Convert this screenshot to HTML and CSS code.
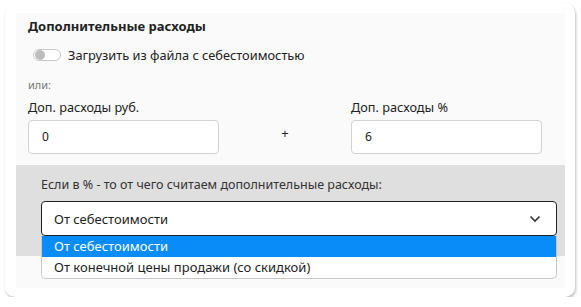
FILE: index.html
```html
<!DOCTYPE html>
<html lang="ru">
<head>
    <meta charset="UTF-8">
    <title>Дополнительные расходы</title>
    <link rel="stylesheet" href="styles.css">
</head>
<body>
<div class="card">
    <div class="panel">
        <div class="title">Дополнительные расходы</div>
        <label class="switch-row">
            <span class="switch"><span class="knob"></span></span>
            <span>Загрузить из файла с себестоимостью</span>
        </label>
        <div class="or">или:</div>
        <div class="fields">
            <div class="field">
                <div class="label">Доп. расходы руб.</div>
                <div class="input">0</div>
            </div>
            <div class="plus">+</div>
            <div class="field">
                <div class="label">Доп. расходы %</div>
                <div class="input">6</div>
            </div>
        </div>
        <div class="base">
            <div class="base-label">Если в % - то от чего считаем дополнительные расходы:</div>
            <div class="select-wrap">
                <div class="select">
                    <span>От себестоимости</span>
                    <svg width="12" height="8" viewBox="0 0 12 8"><path d="M1.5 1.5 L6 6 L10.5 1.5" fill="none" stroke="#333" stroke-width="1.6"/></svg>
                </div>
                <ul class="options">
                    <li class="active">От себестоимости</li>
                    <li>От конечной цены продажи (со скидкой)</li>
                </ul>
            </div>
        </div>
    </div>
</div>
</body>
</html>
```

FILE: styles.css
```css
body {
    margin: 0;
    background: #fff;
    font-family: "Noto Sans", "Open Sans", sans-serif;
    color: #222;
}
.card {
    margin: 3px 0 0 5px;
    width: 570px;
    height: 294px;
    box-sizing: border-box;
    padding: 10px 10px 9px 11px;
    background: #fff;
    border-radius: 10px;
    box-shadow: 1px 2px 3px rgba(0, 0, 0, 0.25);
}
.panel {
    height: 100%;
    background: #fafafa;
    padding-top: 4px;
    box-sizing: border-box;
}
.title {
    padding-left: 12px;
    font-size: 13px;
    font-weight: bold;
    line-height: 18px;
}
.switch-row {
    display: flex;
    align-items: center;
    gap: 7px;
    margin: 11px 0 0 17px;
    font-size: 12.8px;
    line-height: 18px;
}
.switch {
    width: 26px;
    height: 10px;
    border: 1px solid #c8c8c8;
    border-radius: 6px;
    background: #fff;
    position: relative;
}
.knob {
    position: absolute;
    left: 1px;
    top: 0;
    width: 10px;
    height: 10px;
    border-radius: 50%;
    background: #bdbdbd;
}
.or {
    margin: 13px 0 0 12px;
    font-size: 11px;
    line-height: 15px;
    color: #777;
}
.fields {
    display: flex;
    align-items: flex-end;
    padding-left: 12px;
    margin-top: 6px;
}
.field {
    width: 191px;
}
.label {
    font-size: 12.7px;
    line-height: 18px;
    margin-bottom: 4px;
}
.input {
    height: 34px;
    box-sizing: border-box;
    border: 1px solid #d2d2d2;
    border-radius: 4px;
    background: #fff;
    padding-left: 13px;
    font-size: 12px;
    line-height: 32px;
}
.plus {
    width: 132px;
    text-align: center;
    font-size: 13px;
    line-height: 34px;
    margin-bottom: 4px;
}
.base {
    margin-top: 11px;
    height: 91px;
    box-sizing: border-box;
    background: #dfdfdf;
    padding: 11px 8px 0 25px;
}
.base-label {
    font-size: 12.5px;
    line-height: 18px;
    color: #333;
}
.select-wrap {
    position: relative;
    margin-top: 7px;
}
.select {
    height: 35px;
    box-sizing: border-box;
    border: 1px solid #222;
    border-radius: 4px;
    background: #fff;
    display: flex;
    align-items: center;
    justify-content: space-between;
    padding: 0 15px 0 12px;
    font-size: 13px;
}
.options {
    position: absolute;
    left: 0;
    right: 0;
    top: 35px;
    margin: 0;
    padding: 0;
    list-style: none;
    background: #fff;
    border: 1px solid #c8c8c8;
    border-top: none;
    border-radius: 0 0 5px 5px;
    overflow: hidden;
    font-size: 13px;
}
.options li {
    height: 21px;
    line-height: 21px;
    padding-left: 12px;
}
.options li.active {
    background: #0a8cf8;
    color: #fff;
}
```
